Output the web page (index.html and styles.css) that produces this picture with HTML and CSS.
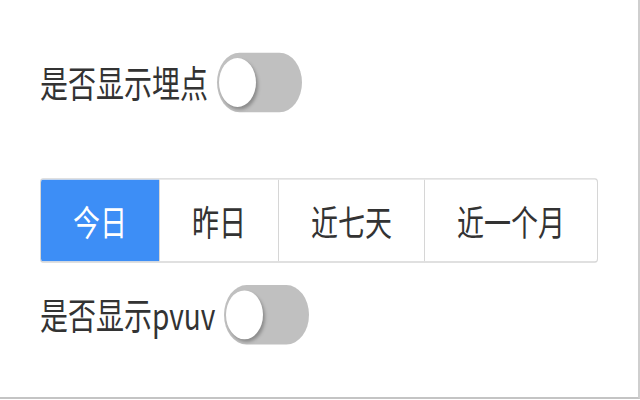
FILE: index.html
```html
<!DOCTYPE html>
<html lang="zh">
<head>
<meta charset="utf-8">
<link rel="stylesheet" href="styles.css">
</head>
<body>
<div class="frame">
  <div class="screen">
    <div class="row row-first">
      <span class="label">是否显示埋点</span>
      <span class="switch"><span class="thumb"></span></span>
    </div>
    <div class="segmented">
      <div class="seg seg-active">今日</div>
      <div class="seg">昨日</div>
      <div class="seg">近七天</div>
      <div class="seg">近一个月</div>
    </div>
    <div class="row row-second">
      <span class="label">是否显示pvuv</span>
      <span class="switch"><span class="thumb"></span></span>
    </div>
  </div>
</div>
</body>
</html>
```
FILE: styles.css
```css
html, body {
  margin: 0;
  padding: 0;
  background: #ffffff;
}
.frame {
  width: 638px;
  height: 397px;
  border-right: 2px solid #cfcfcf;
  border-bottom: 2px solid #c4c4c4;
  overflow: hidden;
  background: #fff;
}
.screen {
  width: 640px;
  padding-left: 40px;
  box-sizing: border-box;
  transform: scaleY(1.32);
  transform-origin: 0 0;
  font-family: "Noto Sans CJK SC", "Noto Sans", sans-serif;
  color: #333333;
  display: flex;
  flex-direction: column;
  align-items: flex-start;
}
.row {
  display: flex;
  align-items: center;
  gap: 9px;
  height: 45px;
}
.row-first {
  margin-top: 40px;
}
.row-second {
  margin-top: 17px;
}
.label {
  font-size: 28px;
  line-height: 45px;
  letter-spacing: 0;
}
.switch {
  width: 85px;
  height: 45px;
  border-radius: 23px;
  background: #c0c0c0;
  display: flex;
  align-items: center;
  padding-left: 2px;
  box-sizing: border-box;
}
.thumb {
  width: 37px;
  height: 37px;
  border-radius: 50%;
  background: #ffffff;
  box-shadow: 2px 2px 3px rgba(0, 0, 0, 0.28);
}
.segmented {
  margin-top: 50px;
  display: flex;
  height: 64px;
  border: 1px solid #d6d6d6;
  border-radius: 3px;
  box-sizing: border-box;
  overflow: hidden;
}
.seg {
  display: flex;
  align-items: center;
  justify-content: center;
  padding: 0 32px;
  font-size: 27px;
  color: #333333;
  border-left: 1px solid #d6d6d6;
}
.seg:first-child {
  border-left: none;
}
.seg-active {
  background: #3d8ef6;
  color: #ffffff;
}
```
